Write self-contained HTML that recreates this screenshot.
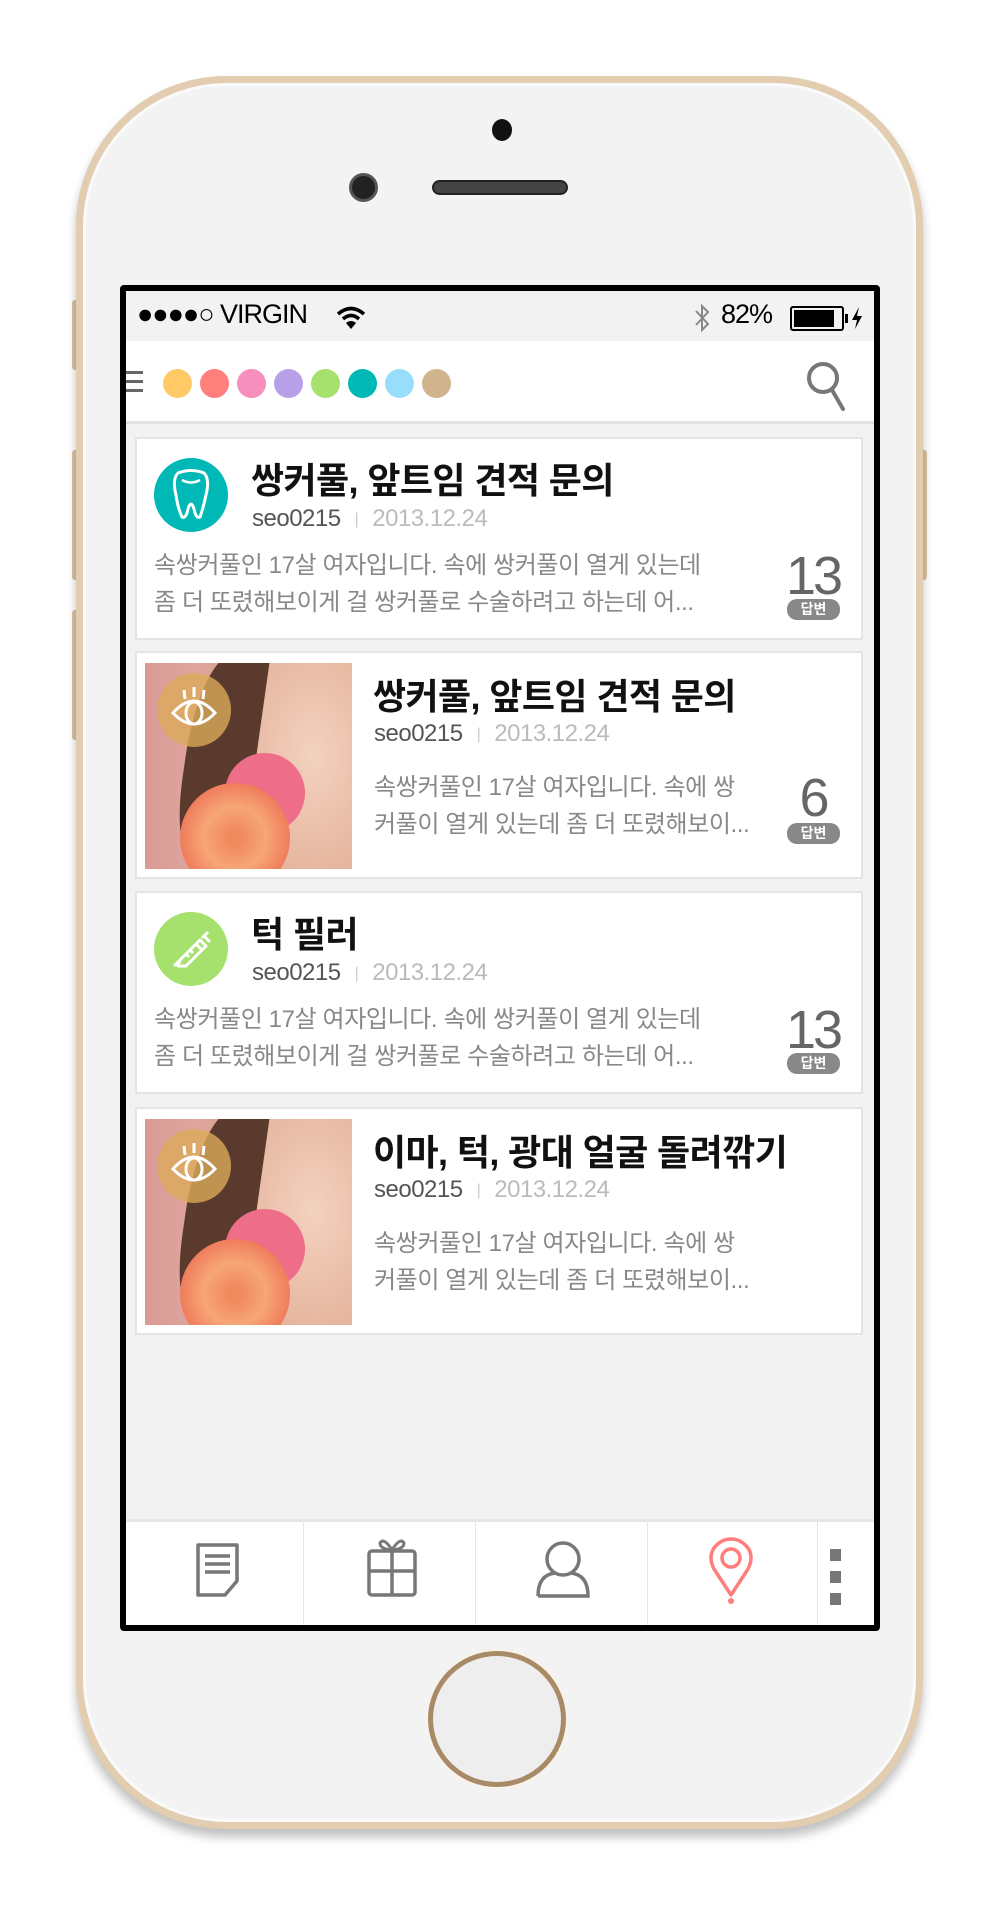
<!DOCTYPE html>
<html><head><meta charset="utf-8">
<style>
*{margin:0;padding:0;box-sizing:border-box}
body{width:1000px;height:1921px;background:#fff;position:relative;overflow:hidden;font-family:"Liberation Sans","Noto Sans CJK KR",sans-serif}
.abs{position:absolute}
.phone{left:76px;top:76px;width:847px;height:1753px;border-radius:150px;background:#e2cdb0;box-shadow:0 8px 10px rgba(0,0,0,.25)}
.face{left:83px;top:83px;width:833px;height:1739px;border-radius:144px;background:#f3f3f3;border:3px solid #fafafa}
.screen{left:120px;top:285px;width:760px;height:1346px;background:#000;border-radius:4px}
.inner{left:126px;top:291px;width:748px;height:1334px;background:#f2f2f2;overflow:hidden}
.card{position:absolute;left:9px;width:728px;background:#fff;border:2px solid #e4e4e4}
.title{position:absolute;font-weight:bold;font-size:36px;color:#111;letter-spacing:-0.6px;white-space:nowrap}
.meta{position:absolute;font-size:24px;color:#555;letter-spacing:-0.5px;white-space:nowrap}
.meta span{color:#bbb}
.meta i{font-style:normal;color:#ccc;font-size:16px;margin:0 14px;position:relative;top:-2px}
.body{position:absolute;font-size:24px;line-height:37px;color:#888;letter-spacing:-0.4px;white-space:nowrap}
.cnt{position:absolute;width:60px;text-align:center;font-size:54px;color:#666;letter-spacing:-3px;line-height:54px}
.badge{position:absolute;width:53px;height:21px;border-radius:10px;background:#888;color:#fff;font-size:14px;font-weight:bold;text-align:center;line-height:21px}
.img{position:absolute;left:8px;width:207px;height:206px;overflow:hidden;background:linear-gradient(90deg,#d99a96 0%,#e0a59e 25%,#d6a38f 45%,#e9c2ad 65%,#f0cdb8 100%)}
.hair{position:absolute;left:40px;top:-10px;width:70px;height:220px;background:#5a3a2c;border-radius:50% 0 0 40%;transform:rotate(8deg)}
.skin{position:absolute;left:78px;top:0;width:150px;height:230px;background:radial-gradient(ellipse at 60% 40%,#f3d2bf,#e4b29a 70%);border-radius:40% 0 0 30%}
.rose{position:absolute;left:35px;top:120px;width:110px;height:110px;border-radius:50%;background:radial-gradient(circle,#f08a5e 10%,#f7a676 40%,#ef7d5c 70%,#e9607a 90%)}
.petal{position:absolute;left:80px;top:90px;width:80px;height:80px;border-radius:50%;background:#ee6d88}
.eyebadge{position:absolute;left:12px;top:10px;width:74px;height:74px;border-radius:50%;background:rgba(219,170,90,.8)}
.tab{position:absolute;top:0;height:106px;border-right:1px solid #e6e6e6}
</style></head><body>
<div class="abs" style="left:72px;top:300px;width:6px;height:70px;background:#d8c3a5;border-radius:3px"></div>
<div class="abs" style="left:72px;top:450px;width:6px;height:130px;background:#d8c3a5;border-radius:3px"></div>
<div class="abs" style="left:72px;top:610px;width:6px;height:130px;background:#d8c3a5;border-radius:3px"></div>
<div class="abs" style="left:921px;top:450px;width:6px;height:130px;background:#d8c3a5;border-radius:3px"></div>
<div class="abs phone"></div>
<div class="abs face"></div>
<div class="abs" style="left:492px;top:119px;width:20px;height:22px;border-radius:50%;background:#111"></div>
<div class="abs" style="left:349px;top:173px;width:29px;height:29px;border-radius:50%;background:#222;border:3px solid #555"></div>
<div class="abs" style="left:432px;top:180px;width:136px;height:15px;border-radius:8px;background:#444;border:2px solid #222"></div>
<div class="abs" style="left:428px;top:1651px;width:138px;height:136px;border-radius:50%;border:5px solid #a88a66;background:#eee;box-shadow:0 0 0 2px #f7f2ea"></div>

<div class="abs screen"></div>
<div class="abs inner">
  <div class="abs" style="left:0;top:0;width:748px;height:50px;background:#f2f2f2"></div>
  <div class="abs" style="left:11px;top:8px;font-size:27px;color:#000;letter-spacing:-1px">●●●●○ VIRGIN</div>
  <svg class="abs" style="left:210px;top:14px" width="30" height="24" viewBox="0 0 30 24"><path d="M2 9 Q15 -2 28 9" stroke="#000" stroke-width="3.5" fill="none"/><path d="M7 14 Q15 7 23 14" stroke="#000" stroke-width="3.5" fill="none"/><path d="M10 18 L15 24 L20 18 Q15 14 10 18Z" fill="#000"/></svg>
  <svg class="abs" style="left:568px;top:12px" width="16" height="30" viewBox="0 0 16 30"><path d="M2 8 L14 21 L8 27 V3 L14 9 L2 22" stroke="#888" stroke-width="2" fill="none"/></svg>
  <div class="abs" style="left:595px;top:8px;font-size:27px;color:#000;letter-spacing:-1px">82%</div>
  <div class="abs" style="left:664px;top:15px;width:54px;height:25px;border:2px solid #000;border-radius:3px"><div style="margin:2px;width:40px;height:17px;background:#000"></div></div>
  <div class="abs" style="left:719px;top:23px;width:3px;height:9px;background:#000"></div>
  <svg class="abs" style="left:725px;top:16px" width="12" height="22" viewBox="0 0 12 22"><path d="M8 0 L1 13 H6 L4 22 L11 9 H6Z" fill="#000"/></svg>
  <div class="abs" style="left:0;top:50px;width:748px;height:83px;background:#fff;border-bottom:3px solid #e3e3e3"></div>
  <div class="abs" style="left:0;top:80px;width:17px;height:3px;background:#666"></div>
  <div class="abs" style="left:0;top:89px;width:17px;height:3px;background:#666"></div>
  <div class="abs" style="left:0;top:98px;width:17px;height:3px;background:#666"></div>
  <div class="abs" style="left:37px;top:78px;width:29px;height:29px;border-radius:50%;background:#ffc965"></div>
  <div class="abs" style="left:74px;top:78px;width:29px;height:29px;border-radius:50%;background:#ff7f7c"></div>
  <div class="abs" style="left:111px;top:78px;width:29px;height:29px;border-radius:50%;background:#f78fbd"></div>
  <div class="abs" style="left:148px;top:78px;width:29px;height:29px;border-radius:50%;background:#b7a0e8"></div>
  <div class="abs" style="left:185px;top:78px;width:29px;height:29px;border-radius:50%;background:#a6e06d"></div>
  <div class="abs" style="left:222px;top:78px;width:29px;height:29px;border-radius:50%;background:#00b8b5"></div>
  <div class="abs" style="left:259px;top:78px;width:29px;height:29px;border-radius:50%;background:#99ddfd"></div>
  <div class="abs" style="left:296px;top:78px;width:29px;height:29px;border-radius:50%;background:#d0b48d"></div>
  <svg class="abs" style="left:680px;top:68px" width="40" height="54" viewBox="0 0 40 54"><circle cx="17" cy="19" r="14" stroke="#777" stroke-width="4" fill="none"/><path d="M26 31 L37 50" stroke="#777" stroke-width="4" stroke-linecap="round"/></svg>

  <div class="card" style="top:146px;height:203px">
    <div class="abs" style="left:17px;top:19px;width:74px;height:74px;border-radius:50%;background:#00b8b5"></div>
    <svg class="abs" style="left:33px;top:30px" width="42" height="52" viewBox="0 0 42 52"><path d="M8 4 Q21 -1 34 4 Q40 10 36 26 Q33 40 30 48 Q26 50 24 40 Q21 30 18 40 Q16 50 12 48 Q8 40 6 26 Q2 10 8 4Z" stroke="#fff" stroke-width="3" fill="none"/><path d="M12 11 Q21 16 30 11" stroke="#fff" stroke-width="2.5" fill="none"/></svg>
    <div class="title" style="left:114px;top:13px">쌍커풀, 앞트임 견적 문의</div>
    <div class="meta" style="left:115px;top:66px">seo0215<i>|</i><span>2013.12.24</span></div>
    <div class="body" style="left:17px;top:108px">속쌍커풀인 17살 여자입니다. 속에 쌍커풀이 열게 있는데<br>좀 더 또렸해보이게 걸 쌍커풀로 수술하려고 하는데 어...</div>
    <div class="cnt" style="left:646px;top:110px">13</div>
    <div class="badge" style="left:650px;top:160px">답변</div>
  </div>
  <div class="card" style="top:360px;height:228px">
    <div class="img" style="top:10px"><div class="skin"></div><div class="hair"></div><div class="petal"></div><div class="rose"></div>
      <div class="eyebadge"><svg width="74" height="74" viewBox="0 0 74 74"><path d="M16 40 Q37 16 58 40 Q37 62 16 40Z" stroke="#fff" stroke-width="3" fill="none"/><ellipse cx="37" cy="40" rx="8" ry="11" stroke="#fff" stroke-width="3" fill="none"/><path d="M28 26 L27 17 M37 24 V14 M46 26 L47 17" stroke="#fff" stroke-width="3"/></svg></div></div>
    <div class="title" style="left:236px;top:15px">쌍커풀, 앞트임 견적 문의</div>
    <div class="meta" style="left:237px;top:67px">seo0215<i>|</i><span>2013.12.24</span></div>
    <div class="body" style="left:237px;top:116px">속쌍커풀인 17살 여자입니다. 속에 쌍<br>커풀이 열게 있는데 좀 더 또렸해보이...</div>
    <div class="cnt" style="left:646px;top:118px">6</div>
    <div class="badge" style="left:650px;top:170px">답변</div>
  </div>
  <div class="card" style="top:600px;height:203px">
    <div class="abs" style="left:17px;top:19px;width:74px;height:74px;border-radius:50%;background:#a6e06d"></div>
    <svg class="abs" style="left:27px;top:29px" width="54" height="54" viewBox="0 0 54 54"><path d="M10 44 L16 38 M16 38 L32 22 L38 28 L22 44 L14 44 L16 38Z M32 22 L36 18 L42 24 L38 28 M38 16 L44 10 M40 14 L46 20 M22 32 L25 35 M26 28 L29 31" stroke="#fff" stroke-width="3" fill="none" stroke-linejoin="round"/></svg>
    <div class="title" style="left:114px;top:13px">턱 필러</div>
    <div class="meta" style="left:115px;top:66px">seo0215<i>|</i><span>2013.12.24</span></div>
    <div class="body" style="left:17px;top:108px">속쌍커풀인 17살 여자입니다. 속에 쌍커풀이 열게 있는데<br>좀 더 또렸해보이게 걸 쌍커풀로 수술하려고 하는데 어...</div>
    <div class="cnt" style="left:646px;top:110px">13</div>
    <div class="badge" style="left:650px;top:160px">답변</div>
  </div>
  <div class="card" style="top:816px;height:228px">
    <div class="img" style="top:10px"><div class="skin"></div><div class="hair"></div><div class="petal"></div><div class="rose"></div>
      <div class="eyebadge"><svg width="74" height="74" viewBox="0 0 74 74"><path d="M16 40 Q37 16 58 40 Q37 62 16 40Z" stroke="#fff" stroke-width="3" fill="none"/><ellipse cx="37" cy="40" rx="8" ry="11" stroke="#fff" stroke-width="3" fill="none"/><path d="M28 26 L27 17 M37 24 V14 M46 26 L47 17" stroke="#fff" stroke-width="3"/></svg></div></div>
    <div class="title" style="left:236px;top:15px">이마, 턱, 광대 얼굴 돌려깎기</div>
    <div class="meta" style="left:237px;top:67px">seo0215<i>|</i><span>2013.12.24</span></div>
    <div class="body" style="left:237px;top:116px">속쌍커풀인 17살 여자입니다. 속에 쌍<br>커풀이 열게 있는데 좀 더 또렸해보이...</div>
  </div>

  <div class="abs" style="left:0;top:1228px;width:748px;height:106px;background:#fff;border-top:3px solid #e6e6e6">
    <div class="tab" style="left:0;width:178px"></div>
    <div class="tab" style="left:178px;width:172px"></div>
    <div class="tab" style="left:350px;width:172px"></div>
    <div class="tab" style="left:522px;width:170px"></div>
    <svg class="abs" style="left:69px;top:20px" width="46" height="56" viewBox="0 0 46 56"><path d="M3 3 H42 V39 L30 53 H3Z" stroke="#777" stroke-width="3.5" fill="none" stroke-linejoin="round"/><path d="M10 14 H35 M10 22 H35 M10 30 H35" stroke="#777" stroke-width="3.5"/></svg>
    <svg class="abs" style="left:240px;top:15px" width="52" height="62" viewBox="0 0 52 62"><rect x="3" y="14" width="46" height="44" rx="3" stroke="#777" stroke-width="3.5" fill="none"/><path d="M26 14 V58 M3 34 H49" stroke="#777" stroke-width="3.5"/><path d="M26 13 Q18 0 14 6 Q14 12 26 13 Q38 12 38 6 Q34 0 26 13" stroke="#777" stroke-width="3" fill="none"/></svg>
    <svg class="abs" style="left:409px;top:19px" width="56" height="58" viewBox="0 0 56 58"><ellipse cx="28" cy="18" rx="16" ry="16" stroke="#777" stroke-width="3.5" fill="none"/><path d="M3 55 Q3 34 20 32 M36 32 Q53 34 53 55 H3" stroke="#777" stroke-width="3.5" fill="none"/></svg>
    <svg class="abs" style="left:582px;top:15px" width="46" height="68" viewBox="0 0 46 68"><path d="M23 58 L6 32 Q0 20 6 11 Q13 2 23 2 Q33 2 40 11 Q46 20 40 32Z" stroke="#ff7d7d" stroke-width="3.5" fill="none" stroke-linejoin="round"/><circle cx="23" cy="21" r="9" stroke="#ff7d7d" stroke-width="3.5" fill="none"/><circle cx="23" cy="64" r="3" fill="#ff7d7d"/></svg>
    <div class="abs" style="left:704px;top:27px;width:11px;height:12px;background:#777"></div>
    <div class="abs" style="left:704px;top:49px;width:11px;height:12px;background:#777"></div>
    <div class="abs" style="left:704px;top:71px;width:11px;height:12px;background:#777"></div>
  </div>
</div>
</body></html>
